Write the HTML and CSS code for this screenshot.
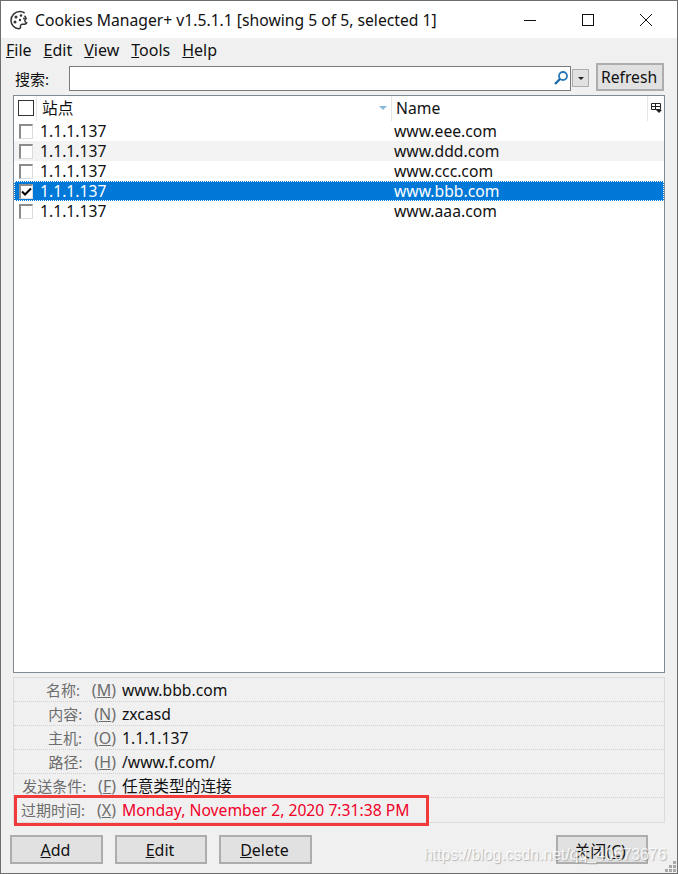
FILE: index.html
```html
<!DOCTYPE html>
<html lang="zh">
<head>
<meta charset="utf-8">
<title>Cookies Manager+</title>
<link rel="stylesheet" href="styles.css">
</head>
<body>
<div class="window">
  <header class="titlebar">
    <svg class="app-icon" width="22" height="22" viewBox="0 0 22 22">
      <path d="M11 2.500C6 2.500 2 6.500 2 11.500c0 4.600 3.600 8.200 7.600 8.200 1.600 0 2.100-1 1.900-2.200-.2-1.300.5-2.300 1.900-2.300h2.100c.8-.1 1.700-.4 2.200-1.300-1.100-.4-2-1.300-1.900-2.500.1-1 .6-1.500 1.400-1.800-.3-1.100-.9-2-1.700-2.800" fill="none" stroke="#333" stroke-width="1.500"/>
      <path d="M11 2.500c1.900 0 3.400.5 4.600 1.600" fill="none" stroke="#333" stroke-width="1.500"/>
      <circle cx="7" cy="8" r="1.500" fill="#333"/><circle cx="12" cy="6.500" r="1.300" fill="#333"/><circle cx="6" cy="13" r="1.500" fill="#333"/><circle cx="11" cy="11" r="1.200" fill="#333"/><circle cx="15" cy="9.500" r="1" fill="#333"/>
    </svg>
    <span class="title">Cookies Manager+ v1.5.1.1 [showing 5 of 5, selected 1]</span>
    <div class="caption">
      <svg class="cap" width="14" height="14" viewBox="0 0 14 14"><path d="M1 7.500h12" stroke="#111" fill="none"/></svg>
      <svg class="cap" width="14" height="14" viewBox="0 0 14 14"><rect x="1.500" y="1.500" width="11" height="11" stroke="#111" fill="none"/></svg>
      <svg class="cap" width="14" height="14" viewBox="0 0 14 14"><path d="M1 1l12 12M13 1L1 13" stroke="#111" fill="none"/></svg>
    </div>
  </header>

  <nav class="menubar">
    <span class="menu"><u>F</u>ile</span>
    <span class="menu"><u>E</u>dit</span>
    <span class="menu"><u>V</u>iew</span>
    <span class="menu"><u>T</u>ools</span>
    <span class="menu"><u>H</u>elp</span>
  </nav>

  <div class="searchrow">
    <label class="search-label">搜索:</label>
    <div class="search-input">
      <svg width="16" height="16" viewBox="0 0 16 16"><circle cx="10" cy="6" r="4" fill="#fff" stroke="#2b79b8" stroke-width="1.800"/><path d="M7 9l-5 5" stroke="#1e6aa8" stroke-width="2.400"/></svg>
    </div>
    <div class="search-drop"><span class="mini-arrow"></span></div>
    <button class="btn refresh">Refresh</button>
  </div>

  <section class="tree">
    <div class="tree-head">
      <div class="col col-check"><span class="check head-check"></span></div>
      <div class="col col-site">
        <span class="col-label">站点</span>
        <span class="sort-arrow"></span>
      </div>
      <div class="col col-name"><span>Name</span></div>
      <div class="col col-pick">
        <svg width="11" height="11" viewBox="0 0 11 11"><path d="M.5 1.500h9v6h-9zM.5 4.500h9M4.500 1.500v6" fill="none" stroke="#222"/><path d="M5 8h6L8 11z" fill="#222"/></svg>
      </div>
    </div>
    <div class="row"><div class="cell-site"><span class="check"></span>1.1.1.137</div><div class="cell-name">www.eee.com</div></div>
    <div class="row alt"><div class="cell-site"><span class="check"></span>1.1.1.137</div><div class="cell-name">www.ddd.com</div></div>
    <div class="row"><div class="cell-site"><span class="check"></span>1.1.1.137</div><div class="cell-name">www.ccc.com</div></div>
    <div class="row selected"><div class="cell-site"><span class="check checked"><svg width="11" height="9" viewBox="0 0 11 9"><path d="M1 4.500l3 3 6-6" fill="none" stroke="#000" stroke-width="2"/></svg></span>1.1.1.137</div><div class="cell-name">www.bbb.com</div></div>
    <div class="row"><div class="cell-site"><span class="check"></span>1.1.1.137</div><div class="cell-name">www.aaa.com</div></div>
  </section>

  <section class="details">
    <div class="detail"><div class="d-label">名称: <span class="key">(<u>M</u>)</span></div><div class="d-value">www.bbb.com</div></div>
    <div class="detail"><div class="d-label">内容: <span class="key">(<u>N</u>)</span></div><div class="d-value">zxcasd</div></div>
    <div class="detail"><div class="d-label">主机: <span class="key">(<u>O</u>)</span></div><div class="d-value">1.1.1.137</div></div>
    <div class="detail"><div class="d-label">路径: <span class="key">(<u>H</u>)</span></div><div class="d-value">/www.f.com/</div></div>
    <div class="detail"><div class="d-label">发送条件: <span class="key">(<u>F</u>)</span></div><div class="d-value">任意类型的连接</div></div>
    <div class="detail last"><div class="d-label">过期时间: <span class="key">(<u>X</u>)</span></div><div class="d-value red">Monday, November 2, 2020 7:31:38 PM</div></div>
    <div class="annotation"></div>
  </section>

  <footer class="actions">
    <button class="btn action add"><u>A</u>dd</button>
    <button class="btn action"><u>E</u>dit</button>
    <button class="btn action add"><u>D</u>elete</button>
    <button class="btn action close">关闭(<u>C</u>)</button>
  </footer>

  <div class="watermark">https://blog.csdn.net/qq_40673676</div>
  <svg class="grip" width="12" height="12" viewBox="0 0 12 12" fill="#a8a8a8"><rect x="8" y="0" width="3" height="3"/><rect x="4" y="4" width="3" height="3"/><rect x="8" y="4" width="3" height="3"/><rect x="0" y="8" width="3" height="3"/><rect x="4" y="8" width="3" height="3"/><rect x="8" y="8" width="3" height="3"/></svg>
</div>
</body>
</html>
```

FILE: styles.css
```css
* { box-sizing: border-box; }
html, body { margin: 0; padding: 0; }
body {
  width: 678px;
  height: 874px;
  overflow: hidden;
  font-family: "Noto Sans", "Noto Sans CJK SC", sans-serif;
  font-size: 15.7px;
  color: #111;
}
.window {
  position: relative;
  width: 678px;
  height: 874px;
  background: #f0f0f0;
  border: 1px solid #6e6e6e;
  display: flex;
  flex-direction: column;
}
.titlebar {
  height: 37px;
  flex: none;
  background: #fff;
  display: flex;
  align-items: center;
  padding-left: 8px;
}
.app-icon { flex: none; margin-right: 4px; }
.title { font-size: 15.7px; white-space: nowrap; flex: 1; }
.caption { display: flex; width: 154px; flex: none; gap: 44px; }
.cap { flex: none; }
.menubar {
  height: 24px;
  flex: none;
  display: flex;
  align-items: center;
  gap: 12px;
  padding-left: 5px;
  font-size: 16px;
}
.searchrow {
  height: 31px;
  flex: none;
  display: flex;
  align-items: center;
  padding: 1px 13px 0 14px;
}
.search-label { width: 54px; flex: none; font-size: 15px; }
.search-input {
  width: 502px;
  height: 25px;
  flex: none;
  background: #fff;
  border: 1px solid #7a7a7a;
  display: flex;
  align-items: center;
  justify-content: flex-end;
  padding-right: 1px;
}
.search-drop {
  width: 17px;
  height: 18px;
  margin-left: 1px;
  flex: none;
  background: #e1e1e1;
  border: 1px solid #adadad;
  display: flex;
  align-items: center;
  justify-content: center;
}
.mini-arrow {
  width: 0;
  height: 0;
  border: 3px solid transparent;
  border-top: 3px solid #222;
  border-bottom: 0;
}
.btn {
  font-family: inherit;
  color: #111;
  background: #e1e1e1;
  border: 2px solid #adadad;
  padding: 0;
  margin: 0;
}
.refresh {
  width: 68px;
  height: 28px;
  margin: 0 0 3px 7px;
  padding-right: 2px;
  flex: none;
  font-size: 15.7px;
}
.tree {
  height: 578px;
  flex: none;
  margin: 2px 12px 0 12px;
  background: #fff;
  border: 1px solid #7f8a96;
}
.tree-head {
  height: 25px;
  display: flex;
}
.col {
  display: flex;
  align-items: center;
  border-right: 1px solid #e5e5e5;
  padding-bottom: 2px;
}
.col-check { width: 23px; flex: none; padding-left: 4px; }
.col-site {
  width: 355px;
  flex: none;
  padding-left: 5px;
  position: relative;
}
.col-name { flex: 1; padding-left: 4px; border-right: 0; }
.col-pick { width: 17px; flex: none; border-right: 0; border-left: 1px solid #e5e5e5; justify-content: center; }
.check {
  display: inline-flex;
  align-items: center;
  justify-content: center;
  flex: none;
  width: 14px;
  height: 15px;
  background: #fff;
  border: 1px solid #dcdcdc;
  border-top: 2px solid #8c8c8c;
  border-left: 2px solid #8c8c8c;
  margin: 0 7px 0 5px;
}
.check.head-check {
  width: 16px;
  height: 16px;
  border: 1px solid #333;
  margin: 0;
}
.sort-arrow {
  position: absolute;
  right: 4px;
  top: 10px;
  width: 0;
  height: 0;
  border: 4px solid transparent;
  border-top: 4px solid #8ab8d8;
  border-bottom: 0;
}
.row {
  height: 20px;
  display: flex;
  align-items: center;
  font-size: 15.7px;
}
.row.alt { background: #f3f3f3; }
.row.selected {
  background: #0078d7;
  color: #fff;
  outline: 1px dotted #fff;
  outline-offset: -1px;
}
.cell-site { width: 378px; display: flex; align-items: center; }
.cell-name { flex: 1; padding-left: 2px; }
.details {
  position: relative;
  height: 146px;
  flex: none;
  margin: 4px 12px 0 12px;
  border: 1px solid #dcdcdc;
}
.detail {
  height: 24px;
  display: flex;
  align-items: center;
  border-bottom: 1px dotted #cfcfcf;
}
.detail.last { border-bottom: 0; }
.d-label {
  width: 102px;
  flex: none;
  text-align: right;
  color: #6d6d6d;
  font-size: 15px;
  white-space: nowrap;
}
.key { font-size: 16px; margin-left: 8px; }
.key u { text-decoration: underline; }
.d-value { margin-left: 6px; font-size: 15.7px; white-space: nowrap; }
.d-value.red { color: #f0002a; }
.annotation {
  position: absolute;
  left: 0;
  top: 117px;
  width: 415px;
  height: 31px;
  border: 3px solid #f33a3a;
}
.actions {
  flex: none;
  margin-top: 12px;
  height: 29px;
  display: flex;
  padding-left: 9px;
  gap: 12px;
}
.action { width: 92px; height: 29px; font-size: 16px; padding-right: 2px; }
.action.add { width: 93px; }
.action.close { margin-left: auto; margin-right: 29px; padding-right: 4px; }
.watermark {
  position: absolute;
  left: 423px;
  top: 845px;
  font-family: "Liberation Sans", sans-serif;
  font-size: 15.8px;
  color: rgba(255,255,255,.85);
  text-shadow: 1px 1px 1px rgba(120,120,120,.5);
  white-space: nowrap;
}
.grip { position: absolute; right: 0; bottom: 0; }
```
